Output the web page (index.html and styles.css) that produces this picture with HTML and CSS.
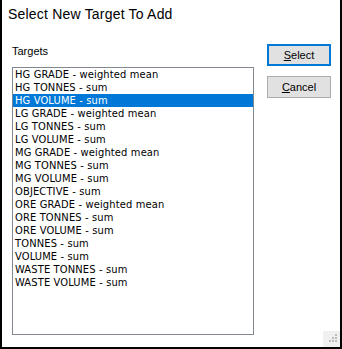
FILE: index.html
```html
<!DOCTYPE html>
<html lang="en">
<head>
  <meta charset="UTF-8" />
  <title>Select New Target To Add</title>
  <link rel="stylesheet" href="styles.css">
</head>
<body>
  <div class="dialog">
    <div class="title">Select New Target To Add</div>

    <div class="content">
      <div class="targets">
        <div class="label">Targets</div>
        <ul class="listbox">
          <li>HG GRADE - weighted mean</li>
          <li>HG TONNES - sum</li>
          <li class="selected">HG VOLUME - sum</li>
          <li>LG GRADE - weighted mean</li>
          <li>LG TONNES - sum</li>
          <li>LG VOLUME - sum</li>
          <li>MG GRADE - weighted mean</li>
          <li>MG TONNES - sum</li>
          <li>MG VOLUME - sum</li>
          <li>OBJECTIVE - sum</li>
          <li>ORE GRADE - weighted mean</li>
          <li>ORE TONNES - sum</li>
          <li>ORE VOLUME - sum</li>
          <li>TONNES - sum</li>
          <li>VOLUME - sum</li>
          <li>WASTE TONNES - sum</li>
          <li>WASTE VOLUME - sum</li>
        </ul>
      </div>

      <div class="buttons">
        <button class="btn default" type="button"><u>S</u>elect</button>
        <button class="btn" type="button"><u>C</u>ancel</button>
      </div>
    </div>

    <div class="grip">
      <svg width="12" height="12" viewBox="0 0 12 12">
        <rect x="9" y="1" width="2" height="2" fill="#bcbcbc"/>
        <rect x="6" y="4" width="2" height="2" fill="#bcbcbc"/>
        <rect x="9" y="4" width="2" height="2" fill="#bcbcbc"/>
        <rect x="3" y="7" width="2" height="2" fill="#bcbcbc"/>
        <rect x="6" y="7" width="2" height="2" fill="#bcbcbc"/>
        <rect x="9" y="7" width="2" height="2" fill="#bcbcbc"/>
      </svg>
    </div>
  </div>
</body>
</html>
```

FILE: styles.css
```css
body {
  margin: 0;
  background-color: #ffffff;
  font-family: 'Liberation Sans', Arial, sans-serif;
  color: #000;
}

.dialog {
  position: relative;
  width: 338px;
  height: 347px;
  border-left: 2px solid #000;
  border-right: 2px solid #000;
  border-bottom: 2px solid #000;
  background-color: #fff;
}

.title {
  font-size: 14px;
  line-height: 16px;
  letter-spacing: 0.2px;
  padding: 6px 0 0 6px;
  color: #000;
}

.content {
  display: flex;
  padding: 22px 0 0 10px;
}

.label {
  font-size: 11px;
  line-height: 14px;
  margin-bottom: 9px;
}

.listbox {
  list-style: none;
  margin: 0;
  padding: 0;
  width: 240px;
  height: 266px;
  border: 1px solid #828790;
  font-family: 'DejaVu Sans Condensed', 'DejaVu Sans', sans-serif;
  font-size: 11px;
  letter-spacing: 0.15px;
}

.listbox li {
  height: 13px;
  line-height: 13px;
  padding-left: 2px;
  white-space: nowrap;
}

.listbox li.selected {
  background-color: #0078d7;
  color: #fff;
}

.buttons {
  display: flex;
  flex-direction: column;
  gap: 10px;
  margin-left: 13px;
}

.btn {
  width: 64px;
  height: 22px;
  padding: 0;
  margin: 0;
  background-color: #e1e1e1;
  border: 1px solid #adadad;
  font-family: 'Liberation Sans', Arial, sans-serif;
  font-size: 11px;
  color: #000;
}

.btn.default {
  border: 2px solid #0078d7;
}

.grip {
  position: absolute;
  right: 0;
  bottom: 0;
  width: 17px;
  height: 16px;
  background-color: #f0f0f0;
  display: flex;
  align-items: flex-end;
  justify-content: flex-end;
}

.grip svg {
  display: block;
  margin: 0 2px 2px 0;
}
```
